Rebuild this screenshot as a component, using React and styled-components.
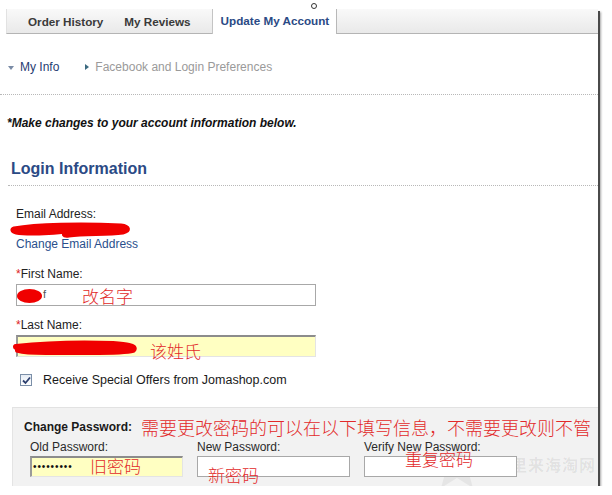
import React from "react";
import styled, { createGlobalStyle } from "styled-components";

const Global = createGlobalStyle`
  html, body { margin: 0; padding: 0; background: #fff; }
  body { font-family: "Liberation Sans", Arial, sans-serif; color: #222; }
`;

const NAVY = "#2b4a85";
const NOTE = "#e22a2a";

const Frame = styled.div`
  position: relative;
  margin-top: 9px;
  width: 598px;
  height: 477px;
  background: #fff;
  box-shadow: 2px 2px 0 #4a4a4a, 3px 3px 2px rgba(0, 0, 0, 0.35);
`;

const TabBar = styled.div`
  display: flex;
  height: 25px;
  font-size: 11.7px;
  font-weight: bold;
`;

const TabGroup = styled.div`
  display: flex;
  align-items: center;
  gap: 21px;
  margin-left: 6px;
  padding: 0 21px;
  background: linear-gradient(#f9f9f9, #e9e9e9);
  border-bottom: 1px solid #b4b4b4;
  border-left: 1px solid #e2e2e2;
  color: #3a3a3a;
`;

const ActiveTab = styled.div`
  position: relative;
  display: flex;
  align-items: center;
  padding: 0 7px 2px 8px;
  background: #fff;
  border-left: 1px solid #c4c4c4;
  border-right: 1px solid #b8b8b8;
  color: ${NAVY};
`;

const CursorRing = styled.span`
  position: absolute;
  top: -6px;
  left: 98px;
  width: 4px;
  height: 4px;
  border: 1px solid #333;
  border-radius: 50%;
`;

const TabFill = styled.div`
  flex: 1;
  background: linear-gradient(#f9f9f9, #e9e9e9);
  border-bottom: 1px solid #b4b4b4;
`;

const SubNav = styled.div`
  display: flex;
  align-items: center;
  height: 14px;
  padding: 26px 0 20px 8px;
  font-size: 12px;
  line-height: 14px;
  border-bottom: 1px dotted #b8b8b8;
`;

const SubItem = styled.span`
  display: flex;
  align-items: center;
  gap: 6px;
  margin-right: ${(p) => p.$gap || 0}px;
  color: ${(p) => (p.$active ? "#1f3c72" : "#9a9a9a")};
`;

const Caret = styled.span`
  width: 0;
  height: 0;
  ${(p) =>
    p.$down
      ? `border-left: 3.5px solid transparent; border-right: 3.5px solid transparent; border-top: 4px solid #7a8ba6; margin-top: 1px;`
      : `border-top: 3.5px solid transparent; border-bottom: 3.5px solid transparent; border-left: 4px solid #3c6a80;`}
`;

const Intro = styled.p`
  margin: 21px 0 0 7px;
  font-size: 12px;
  line-height: 14px;
  font-weight: bold;
  font-style: italic;
  color: #111;
`;

const SectionTitle = styled.h2`
  margin: 29px 0 0 8px;
  padding: 0 0 6px 3px;
  font-size: 16px;
  line-height: 20px;
  font-weight: bold;
  color: ${NAVY};
  border-bottom: 1px dotted #b8b8b8;
`;

const Fields = styled.div`
  display: flex;
  flex-direction: column;
  padding-left: 16px;
`;

const Label = styled.label`
  display: block;
  margin-top: ${(p) => p.$top || 0}px;
  font-size: 12px;
  line-height: 14px;
  color: #222;
`;

const Req = styled.span`
  color: #d22;
`;

const Redacted = styled.div`
  position: relative;
  height: 16px;
`;

const Scribble = styled.svg`
  position: absolute;
  left: ${(p) => p.$x}px;
  top: ${(p) => p.$y}px;
  overflow: visible;
`;

const Link = styled.a`
  font-size: 12px;
  line-height: 14px;
  color: #2a4f8c;
  text-decoration: none;
`;

const TextBox = styled.div`
  position: relative;
  box-sizing: border-box;
  width: ${(p) => p.$w}px;
  height: ${(p) => p.$h}px;
  margin-top: 3px;
  background: ${(p) => (p.$filled ? "#ffffc2" : "#fff")};
  ${(p) =>
    p.$filled
      ? `border-top: 2px solid #8c8c8c; border-left: 2px solid #9a9a9a; border-right: 1px solid #e4e4e4; border-bottom: 1px solid #e4e4e4;`
      : `border: 1px solid #a8a8a8;`}
`;

const Note = styled.span`
  position: absolute;
  left: ${(p) => p.$x}px;
  top: ${(p) => p.$y}px;
  font-family: "Noto Sans CJK SC", "Noto Sans", sans-serif;
  font-size: ${(p) => p.$size || 17}px;
  font-weight: 300;
  line-height: 20px;
  color: ${NOTE};
  white-space: nowrap;
`;

const Glyph = styled.span`
  position: absolute;
  left: ${(p) => p.$x}px;
  top: ${(p) => p.$y}px;
  font-size: 11px;
  color: #555;
`;

const CheckRow = styled.div`
  display: flex;
  align-items: center;
  gap: 11px;
  margin: 16px 0 0 4px;
  font-size: 12.5px;
  line-height: 14px;
  color: #1a1a1a;
`;

const CheckBox = styled.span`
  display: flex;
  align-items: center;
  justify-content: center;
  box-sizing: border-box;
  width: 12px;
  height: 12px;
  border: 1px solid #7b8fa8;
  background: linear-gradient(#e6ecf4, #fff);
`;

const PasswordBox = styled.div`
  position: relative;
  overflow: hidden;
  margin: 20px 0 0 12px;
  height: 60px;
  padding: 9px 0 9px 11px;
  background: #f2f2f2;
  border-top: 1px solid #e2e2e2;
  border-left: 1px solid #e4e4e4;
`;

const PasswordHead = styled.div`
  display: flex;
  align-items: center;
  gap: 9px;
  height: 20px;
`;

const HeadLabel = styled.span`
  font-size: 12px;
  font-weight: bold;
  color: #1a1a1a;
`;

const HeadNote = styled.span`
  font-family: "Noto Sans CJK SC", "Noto Sans", sans-serif;
  font-size: 18px;
  font-weight: 300;
  color: ${NOTE};
  white-space: nowrap;
`;

const PasswordGrid = styled.div`
  display: grid;
  grid-template-columns: 167px 167px 167px;
  margin: 3px 0 0 6px;
`;

const Column = styled.div`
  display: flex;
  flex-direction: column;
`;

const SmallLabel = styled.span`
  font-size: 12px;
  line-height: 14px;
  color: #2a2a2a;
`;

const PassBox = styled(TextBox)`
  margin-top: 2px;
`;

const Dots = styled.span`
  position: absolute;
  left: 1px;
  top: 2px;
  font-size: 10px;
  line-height: 14px;
  letter-spacing: 0.9px;
  color: #111;
`;

const Watermark = styled.div`
  position: absolute;
  right: 2px;
  top: 31px;
  display: flex;
  align-items: center;
  gap: 10px;
  color: rgba(0, 0, 0, 0.07);
  font-family: "Noto Sans CJK SC", serif;
  font-size: 16px;
  font-weight: bold;
  letter-spacing: 1px;
  pointer-events: none;
`;

export default function App() {
  return (
    <>
      <Global />
      <Frame>
        <TabBar>
          <TabGroup>
            <span>Order History</span>
            <span>My Reviews</span>
          </TabGroup>
          <ActiveTab>
            <CursorRing />
            Update My Account
          </ActiveTab>
          <TabFill />
        </TabBar>

        <SubNav>
          <SubItem $active $gap={26}>
            <Caret $down />
            My Info
          </SubItem>
          <SubItem>
            <Caret />
            Facebook and Login Preferences
          </SubItem>
        </SubNav>

        <Intro>*Make changes to your account information below.</Intro>

        <SectionTitle>Login Information</SectionTitle>

        <Fields>
          <Label $top={21}>Email Address:</Label>
          <Redacted>
            <Scribble $x={-5} $y={1} width="124" height="16">
              <path
                d="M3 6 C25 2, 70 1, 110 3 C119 4, 120 9, 112 11 C95 13, 75 12, 58 14 C52 15, 50 12, 56 10 C40 12, 15 13, 5 11 C0 10, 0 7, 3 6 Z"
                fill="#f00000"
                stroke="#f00000"
                strokeWidth="3"
                strokeLinejoin="round"
              />
            </Scribble>
          </Redacted>
          <Link href="#">Change Email Address</Link>

          <Label $top={16}>
            <Req>*</Req>First Name:
          </Label>
          <TextBox $w={300} $h={22}>
            <Scribble $x={0} $y={4} width="26" height="14">
              <ellipse cx="12.5" cy="7" rx="12.5" ry="7" fill="#f00000" />
            </Scribble>
            <Glyph $x={26} $y={3}>f</Glyph>
            <Note $x={65} $y={1}>改名字</Note>
          </TextBox>

          <Label $top={12}>
            <Req>*</Req>Last Name:
          </Label>
          <TextBox $w={300} $h={22} $filled>
            <Scribble $x={-5} $y={4} width="126" height="14">
              <path
                d="M3 6 C30 3, 70 2, 100 3 C112 4, 124 5, 120 9 C110 12, 80 11, 50 11 C30 11, 15 12, 5 9"
                fill="#f00000"
                stroke="#f00000"
                strokeWidth="6"
                strokeLinecap="round"
                strokeLinejoin="round"
              />
            </Scribble>
            <Note $x={132} $y={4}>该姓氏</Note>
          </TextBox>

          <CheckRow>
            <CheckBox>
              <svg width="9" height="9" viewBox="0 0 9 9">
                <path d="M1 4.5 L3.5 7 L8 1.5" fill="none" stroke="#2d3f6e" strokeWidth="1.8" />
              </svg>
            </CheckBox>
            Receive Special Offers from Jomashop.com
          </CheckRow>
        </Fields>

        <PasswordBox>
          <Watermark>
            <svg width="54" height="50" viewBox="0 0 54 50">
              <path d="M27 2 L34 19 L52 20 L38 31 L43 49 L27 39 L11 49 L16 31 L2 20 L20 19 Z" fill="rgba(0,0,0,0.05)" />
            </svg>
            手里来海淘网
          </Watermark>
          <PasswordHead>
            <HeadLabel>Change Password:</HeadLabel>
            <HeadNote>需要更改密码的可以在以下填写信息，不需要更改则不管</HeadNote>
          </PasswordHead>
          <PasswordGrid>
            <Column>
              <SmallLabel>Old Password:</SmallLabel>
              <PassBox $w={153} $h={21} $filled>
                <Dots>•••••••••</Dots>
                <Note $x={58} $y={-2}>旧密码</Note>
              </PassBox>
            </Column>
            <Column>
              <SmallLabel>New Password:</SmallLabel>
              <PassBox $w={153} $h={21}>
                <Note $x={10} $y={8}>新密码</Note>
              </PassBox>
            </Column>
            <Column>
              <SmallLabel>Verify New Password:</SmallLabel>
              <PassBox $w={153} $h={21}>
                <Note $x={40} $y={-8}>重复密码</Note>
              </PassBox>
            </Column>
          </PasswordGrid>
        </PasswordBox>
      </Frame>
    </>
  );
}
